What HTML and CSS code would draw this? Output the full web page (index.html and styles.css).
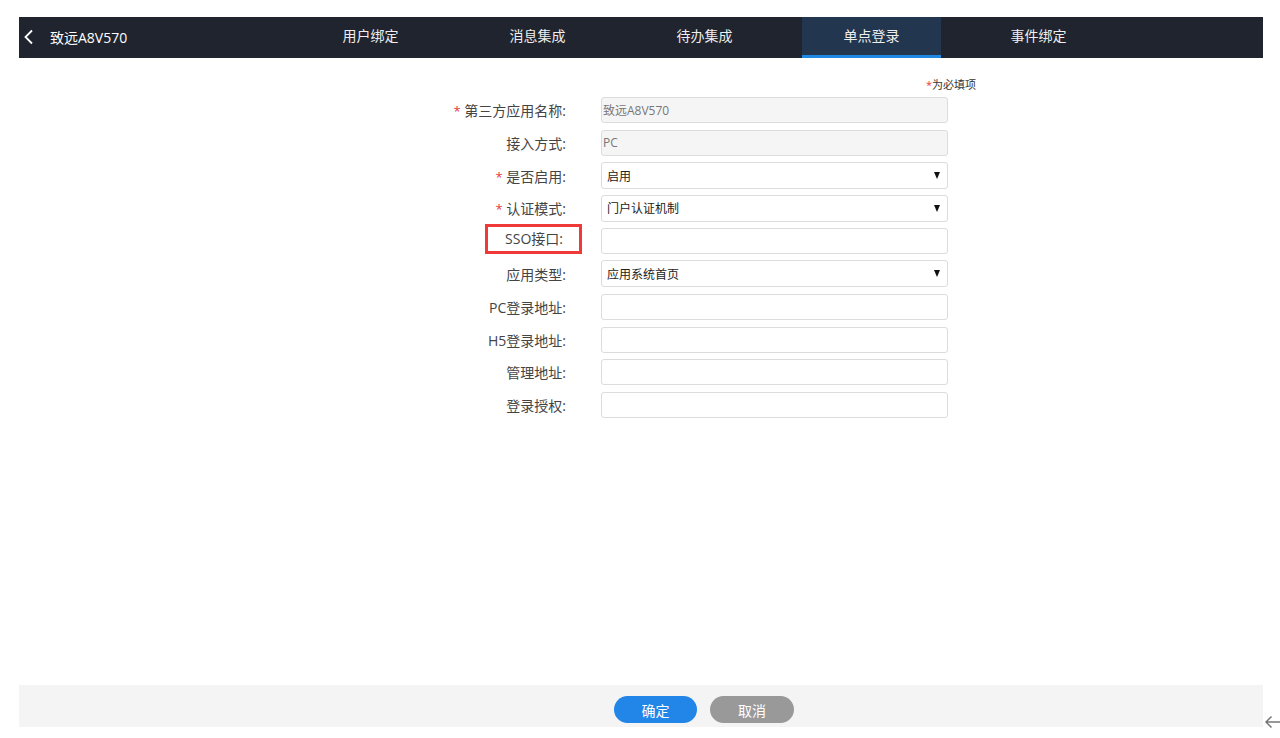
FILE: index.html
```html
<!DOCTYPE html>
<html lang="zh-CN">
<head>
<meta charset="utf-8">
<title>致远A8V570</title>
<link rel="stylesheet" href="styles.css">
</head>
<body>
<div class="page">
  <header class="topbar">
    <div class="brand">
      <svg class="back" width="12" height="16" viewBox="0 0 12 16"><path d="M9 1.5 L2.5 8 L9 14.5" fill="none" stroke="#fff" stroke-width="1.8"/></svg>
      <span class="title">致远A8V570</span>
    </div>
    <nav class="tabs">
      <div class="tab">用户绑定</div>
      <div class="tab">消息集成</div>
      <div class="tab">待办集成</div>
      <div class="tab active">单点登录</div>
      <div class="tab">事件绑定</div>
    </nav>
  </header>
  <main class="main">
    <div class="note"><span class="star">*</span>为必填项</div>
    <div class="form">
      <div class="row"><label class="lbl"><span class="star">*</span> 第三方应用名称:</label><div class="ctl disabled">致远A8V570</div></div>
      <div class="row"><label class="lbl">接入方式:</label><div class="ctl disabled">PC</div></div>
      <div class="row"><label class="lbl"><span class="star">*</span> 是否启用:</label><div class="ctl sel"><span>启用</span><span class="tri"></span></div></div>
      <div class="row"><label class="lbl"><span class="star">*</span> 认证模式:</label><div class="ctl sel"><span>门户认证机制</span><span class="tri"></span></div></div>
      <div class="row"><label class="lbl"><span class="hl">SSO接口:</span></label><div class="ctl"></div></div>
      <div class="row"><label class="lbl">应用类型:</label><div class="ctl sel"><span>应用系统首页</span><span class="tri"></span></div></div>
      <div class="row"><label class="lbl">PC登录地址:</label><div class="ctl"></div></div>
      <div class="row"><label class="lbl">H5登录地址:</label><div class="ctl"></div></div>
      <div class="row"><label class="lbl">管理地址:</label><div class="ctl"></div></div>
      <div class="row"><label class="lbl">登录授权:</label><div class="ctl"></div></div>
    </div>
  </main>
  <footer class="footer">
    <button class="btn ok">确定</button>
    <button class="btn cancel">取消</button>
  </footer>
</div>
<div class="corner-arrow">
  <svg width="16" height="14" viewBox="0 0 16 14"><path d="M16 7 H2 M7.5 1.5 L2 7 L7.5 12.5" fill="none" stroke="#777" stroke-width="1.5"/></svg>
</div>
</body>
</html>
```

FILE: styles.css
```css
* { box-sizing: border-box; }
html, body { margin: 0; padding: 0; background: #fff; }
body {
  font-family: "Open Sans", "Noto Sans CJK SC", sans-serif;
  color: #444;
  width: 1280px;
  height: 738px;
  overflow: hidden;
  position: relative;
}
.page {
  margin: 17px 17px 0 19px;
  width: 1244px;
  height: 710px;
  display: flex;
  flex-direction: column;
}
.topbar {
  height: 41px;
  background: #20242e;
  display: flex;
  align-items: stretch;
  flex: none;
}
.brand {
  display: flex;
  align-items: center;
  padding-left: 4px;
  width: 282px;
  padding-bottom: 2px;
}
.back { margin-right: 15px; }
.title { color: #fff; font-size: 14px; }
.tabs { display: flex; gap: 28px; }
.tab {
  width: 139px;
  display: flex;
  align-items: center;
  justify-content: center;
  color: #eee;
  font-size: 14px;
  border-bottom: 3px solid transparent;
  padding-bottom: 2px;
}
.tab.active { background: #22364f; border-bottom-color: #1e88e5; }
.main { flex: 1; position: relative; }
.note {
  font-size: 11px;
  color: #333;
  text-align: right;
  width: 957px;
  padding-top: 20px;
  height: 39px;
  line-height: 14px;
}
.star { color: #e43b3b; }
.form { display: flex; flex-direction: column; gap: 6.8px; }
.row { display: flex; align-items: center; height: 26px; }
.lbl {
  width: 548px;
  text-align: right;
  font-size: 14px;
  color: #444;
  padding-right: 1px;
  margin-right: 34px;
  white-space: nowrap;
}
.lbl .star { font-size: 13px; }
.hl {
  display: inline-block;
  border: 3px solid #f03a3a;
  width: 97px;
  height: 30px;
  line-height: 24px;
  margin-right: -16px;
  padding-right: 16px;
  text-align: right;
  position: relative;
  top: -2px;
}
.ctl {
  width: 347px;
  height: 26px;
  border: 1px solid #dcdcdc;
  border-radius: 3px;
  background: #fff;
  font-size: 12px;
  color: #222;
  display: flex;
  align-items: center;
  padding: 0 5px;
}
.ctl.disabled { background: #f5f5f5; color: #777; padding-left: 1px; }
.ctl.sel { justify-content: space-between; height: 27px; }
.tri {
  width: 0; height: 0;
  border-left: 3.5px solid transparent;
  border-right: 3.5px solid transparent;
  border-top: 7px solid #111;
  margin-right: 2px;
}
.footer {
  height: 42px;
  background: #f4f4f4;
  flex: none;
  display: flex;
  align-items: flex-start;
  padding-top: 11px;
  padding-left: 595px;
  gap: 13px;
}
.btn {
  width: 83px;
  height: 27px;
  border: none;
  border-radius: 14px;
  color: #fff;
  font-family: "Open Sans", "Noto Sans CJK SC", sans-serif;
  font-size: 14px;
  padding: 0;
}
.btn.ok { background: #2186e8; }
.btn.cancel { background: #999; width: 84px; }
.corner-arrow { position: absolute; left: 1264px; top: 712px; }
```
